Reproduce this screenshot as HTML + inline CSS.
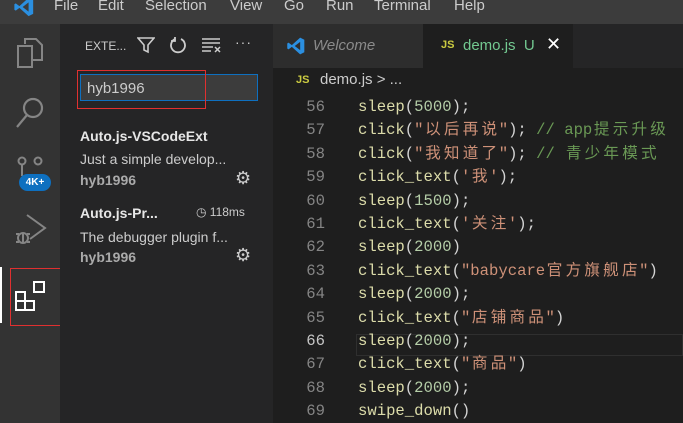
<!DOCTYPE html>
<html><head><meta charset="utf-8"><style>
*{margin:0;padding:0;box-sizing:border-box}
body{width:683px;height:423px;overflow:hidden;background:#1e1e1e;font-family:"Liberation Sans","Noto Sans CJK SC",sans-serif;position:relative}
.abs{position:absolute}
#menu{left:0;top:0;width:683px;height:24px;background:#3c3c3c;color:#ccc;font-size:15px}
#menu span{position:absolute;top:-3px}
#act{left:0;top:24px;width:60px;height:399px;background:#333}
#side{left:60px;top:24px;width:213px;height:399px;background:#252526;color:#ccc}
#tabs{left:273px;top:24px;width:410px;height:44px;background:#252526}
.code{font-family:"Liberation Mono","Noto Sans CJK SC",monospace;font-size:15.6px;white-space:pre}
.ln{position:absolute;left:273px;width:52px;text-align:right;color:#858585;line-height:23px;height:23px}
.cl{position:absolute;left:358px;color:#d4d4d4;line-height:23px;height:23px;overflow:visible}
.f{color:#dcdcaa}.s{color:#ce9178}.n{color:#b5cea8}.c{color:#6a9955}
.k{display:inline-block;width:18.8px;text-align:center;line-height:23px;height:23px;vertical-align:top}
</style></head><body>
<div id="menu" class="abs">
<svg class="abs" style="left:13px;top:-4px" width="22" height="22" viewBox="0 0 24 24"><path d="M17 2 L22 4.5 V19.5 L17 22 L7 13 L3 16 L1.5 15 V9 L3 8 L7 11 Z M17 7 L10.5 12 L17 17 Z" fill="#2b8fe0"/></svg>
<span style="left:54px">File</span><span style="left:98px">Edit</span><span style="left:145px">Selection</span><span style="left:230px">View</span><span style="left:284px">Go</span><span style="left:326px">Run</span><span style="left:374px">Terminal</span><span style="left:454px">Help</span>
</div>
<div id="act" class="abs">
<svg class="abs" style="left:16px;top:14px" width="28" height="30" viewBox="0 0 28 30" fill="none" stroke="#858585" stroke-width="2"><path d="M9 6 V1 H20 L26 7 V22 H17"/><path d="M2 8 H16 V29 H2 Z"/></svg>
<svg class="abs" style="left:15px;top:72px" width="30" height="34" fill="none" stroke="#858585" stroke-width="2.2"><circle cx="18" cy="12" r="9"/><path d="M12 19 L2 31"/></svg>
<svg class="abs" style="left:16px;top:132px" width="28" height="24" fill="none" stroke="#858585" stroke-width="2"><circle cx="6" cy="5" r="3.5"/><circle cx="22" cy="5" r="3.5"/><path d="M6 9 V20"/></svg>
<div class="abs" style="left:19px;top:150px;width:32px;height:17px;border-radius:9px;background:#0e70c0;color:#fff;font-size:10px;font-weight:bold;text-align:center;line-height:17px">4K+</div>
<svg class="abs" style="left:14px;top:188px" width="34" height="36" fill="none" stroke="#858585" stroke-width="2"><path d="M13 3 L31 16 L16 27"/><circle cx="9" cy="26" r="5"/><path d="M2 22 H5 M2 30 H5 M13 22 H16 M13 30 H16 M9 21 V31"/></svg>
<div class="abs" style="left:0;top:243px;width:2px;height:56px;background:#fff"></div>
<div class="abs" style="left:10px;top:244px;width:54px;height:58px;border:1px solid #e03030"></div>
<svg class="abs" style="left:14px;top:256px" width="34" height="34" fill="none" stroke="#fff" stroke-width="2"><path d="M2 12 H11 V30 H2 Z M2 21 H20 V30 H11"/><rect x="20" y="2" width="10" height="10"/></svg>
</div>
<div id="side" class="abs">
<div class="abs" style="left:25px;top:15px;font-size:12px">EXTE...</div>
<svg class="abs" style="left:77px;top:12px" width="18" height="18" fill="none" stroke="#ccc" stroke-width="1.6"><path d="M1 2 H17 L11 9 V16 L7 14 V9 Z"/></svg>
<svg class="abs" style="left:109px;top:12px" width="18" height="18" fill="none" stroke="#ccc" stroke-width="1.8"><path d="M6 3 A7 7 0 1 0 12 3"/><path d="M6 1 V5 H2"/></svg>
<svg class="abs" style="left:141px;top:13px" width="20" height="16" fill="none" stroke="#ccc" stroke-width="1.5"><path d="M1 2 H19 M1 6 H19 M1 10 H12 M1 14 H10 M14 10 L19 15 M19 10 L14 15"/></svg>
<div class="abs" style="left:175px;top:10px;font-size:14px;letter-spacing:1px">···</div>
<div class="abs" style="left:20px;top:50px;width:178px;height:27px;background:#3c3c3c;border:1px solid #0e70c0"></div>
<div class="abs" style="left:17px;top:46px;width:129px;height:39px;border:1px solid #e03030"></div>
<div class="abs" style="left:27px;top:56px;font-size:15px;color:#ccc">hyb1996</div>
<div class="abs" style="left:20px;top:104px;font-size:14px;font-weight:bold;color:#e7e7e7">Auto.js-VSCodeExt</div>
<div class="abs" style="left:20px;top:127px;font-size:14px">Just a simple develop...</div>
<div class="abs" style="left:20px;top:148px;font-size:14px;font-weight:bold;color:#aaa">hyb1996</div>
<div class="abs" style="left:175px;top:144px;font-size:18px;color:#ccc">⚙</div>
<div class="abs" style="left:20px;top:181px;font-size:14px;font-weight:bold;color:#e7e7e7">Auto.js-Pr...</div>
<div class="abs" style="left:136px;top:181px;font-size:12px">◷ 118ms</div>
<div class="abs" style="left:20px;top:205px;font-size:14px">The debugger plugin f...</div>
<div class="abs" style="left:20px;top:225px;font-size:14px;font-weight:bold;color:#aaa">hyb1996</div>
<div class="abs" style="left:175px;top:221px;font-size:18px;color:#ccc">⚙</div>
</div>
<div id="tabs" class="abs">
<div class="abs" style="left:0;top:0;width:150px;height:44px;background:#2d2d2d"></div>
<svg class="abs" style="left:13px;top:12px" width="20" height="20" viewBox="0 0 24 24"><path d="M17 2 L22 4.5 V19.5 L17 22 L7 13 L3 16 L1.5 15 V9 L3 8 L7 11 Z M17 7 L10.5 12 L17 17 Z" fill="#2b8fe0"/></svg>
<div class="abs" style="left:40px;top:13px;font-size:15px;font-style:italic;color:#8b8b8b">Welcome</div>
<div class="abs" style="left:150px;top:0;width:150px;height:44px;background:#1e1e1e"></div>
<div class="abs" style="left:168px;top:15px;font-size:11px;font-weight:bold;color:#cbcb41">JS</div>
<div class="abs" style="left:190px;top:13px;font-size:15px;color:#73c991">demo.js&nbsp;&nbsp;U</div>
<div class="abs" style="left:273px;top:10px;font-size:18px;color:#fff">✕</div>
</div>
<div class="abs" style="left:296px;top:74px;font-size:11px;font-weight:bold;color:#cbcb41">JS</div>
<div class="abs" style="left:320px;top:71px;font-size:15px;color:#ccc">demo.js &gt; ...</div>
<div class="abs" style="left:356px;top:334px;width:327px;height:22px;border:1px solid #2f2f2f"></div>
<div class="code">
<div class="ln" style="top:96px">56</div><div class="cl" style="top:96px"><span class="f">sleep</span>(<span class="n">5000</span>);</div>
<div class="ln" style="top:119px">57</div><div class="cl" style="top:119px"><span class="f">click</span>(<span class="s">"<span class="k">以</span><span class="k">后</span><span class="k">再</span><span class="k">说</span>"</span>); <span class="c">// app<span class="k">提</span><span class="k">示</span><span class="k">升</span><span class="k">级</span></span></div>
<div class="ln" style="top:143px">58</div><div class="cl" style="top:143px"><span class="f">click</span>(<span class="s">"<span class="k">我</span><span class="k">知</span><span class="k">道</span><span class="k">了</span>"</span>); <span class="c">// <span class="k">青</span><span class="k">少</span><span class="k">年</span><span class="k">模</span><span class="k">式</span></span></div>
<div class="ln" style="top:166px">59</div><div class="cl" style="top:166px"><span class="f">click_text</span>(<span class="s">'<span class="k">我</span>'</span>);</div>
<div class="ln" style="top:190px">60</div><div class="cl" style="top:190px"><span class="f">sleep</span>(<span class="n">1500</span>);</div>
<div class="ln" style="top:213px">61</div><div class="cl" style="top:213px"><span class="f">click_text</span>(<span class="s">'<span class="k">关</span><span class="k">注</span>'</span>);</div>
<div class="ln" style="top:236px">62</div><div class="cl" style="top:236px"><span class="f">sleep</span>(<span class="n">2000</span>)</div>
<div class="ln" style="top:260px">63</div><div class="cl" style="top:260px"><span class="f">click_text</span>(<span class="s">"babycare<span class="k">官</span><span class="k">方</span><span class="k">旗</span><span class="k">舰</span><span class="k">店</span>"</span>)</div>
<div class="ln" style="top:283px">64</div><div class="cl" style="top:283px"><span class="f">sleep</span>(<span class="n">2000</span>);</div>
<div class="ln" style="top:307px">65</div><div class="cl" style="top:307px"><span class="f">click_text</span>(<span class="s">"<span class="k">店</span><span class="k">铺</span><span class="k">商</span><span class="k">品</span>"</span>)</div>
<div class="ln" style="top:330px;color:#c6c6c6">66</div><div class="cl" style="top:330px"><span class="f">sleep</span>(<span class="n">2000</span>);</div>
<div class="ln" style="top:353px">67</div><div class="cl" style="top:353px"><span class="f">click_text</span>(<span class="s">"<span class="k">商</span><span class="k">品</span>"</span>)</div>
<div class="ln" style="top:377px">68</div><div class="cl" style="top:377px"><span class="f">sleep</span>(<span class="n">2000</span>);</div>
<div class="ln" style="top:400px">69</div><div class="cl" style="top:400px"><span class="f">swipe_down</span>()</div>
</div>
</body></html>
